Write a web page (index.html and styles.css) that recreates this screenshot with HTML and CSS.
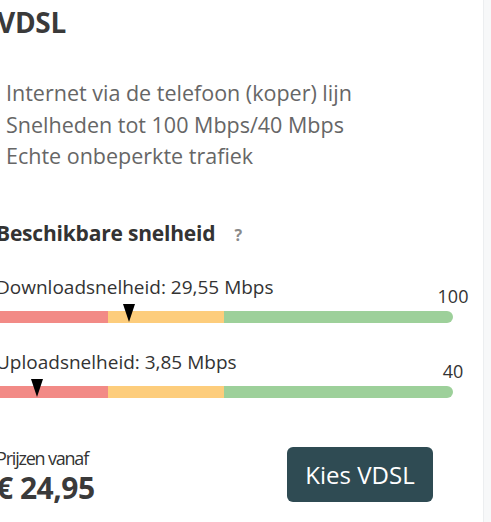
FILE: index.html
```html
<!DOCTYPE html>
<html lang="nl">
<head>
<meta charset="utf-8">
<title>VDSL</title>
<link rel="stylesheet" href="styles.css">
</head>
<body>
<div class="page">
  <main class="card">
    <h1 class="title">VDSL</h1>
    <ul class="features">
      <li>Internet via de telefoon (koper) lijn</li>
      <li>Snelheden tot 100 Mbps/40 Mbps</li>
      <li>Echte onbeperkte trafiek</li>
    </ul>
    <h2 class="subtitle">Beschikbare snelheid <span class="help">?</span></h2>

    <section class="speed speed-down">
      <div class="speed-head">
        <span class="speed-label">Downloadsnelheid: 29,55 Mbps</span>
        <span class="speed-max">100</span>
      </div>
      <div class="bar">
        <span class="seg seg-red"></span><span class="seg seg-yellow"></span><span class="seg seg-green"></span>
        <span class="marker" style="left:127px"></span>
      </div>
    </section>

    <section class="speed speed-up">
      <div class="speed-head">
        <span class="speed-label">Uploadsnelheid: 3,85 Mbps</span>
        <span class="speed-max">40</span>
      </div>
      <div class="bar">
        <span class="seg seg-red"></span><span class="seg seg-yellow"></span><span class="seg seg-green"></span>
        <span class="marker" style="left:35px"></span>
      </div>
    </section>

    <div class="pricing">
      <div class="price-block">
        <div class="price-from">Prijzen vanaf</div>
        <div class="price">€ 24,95</div>
      </div>
      <button class="cta" type="button">Kies VDSL</button>
    </div>
  </main>
  <aside class="side"></aside>
</div>
</body>
</html>
```

FILE: styles.css
```css
* { box-sizing: border-box; }
html, body { margin: 0; padding: 0; background: #fff; }
body {
  font-family: "Open Sans", "Liberation Sans", sans-serif;
  color: #3b3b3b;
  overflow: hidden;
}
.page {
  display: flex;
  width: 491px;
  height: 522px;
}
.card {
  width: 483px;
  flex: none;
  padding: 5px 13px 0 0;
}
.card > * { margin-left: -4px; }
.side {
  flex: 1;
  background: #f7f8f9;
  border-left: 1px solid #eceef0;
}
.title {
  margin: 0 0 0 -3px;
  font-size: 28px;
  line-height: 34px;
  font-weight: 700;
  color: #3a3a3a;
  letter-spacing: -0.3px;
}
.features {
  list-style: none;
  margin: 38px 0 0 -4px;
  padding: 0 0 0 10px;
  font-size: 21.5px;
  line-height: 31.5px;
  color: #666;
}
.subtitle {
  margin: 49px 0 0 -4px;
  font-size: 21px;
  line-height: 24px;
  font-weight: 700;
  color: #333;
  letter-spacing: -0.2px;
}
.help {
  font-size: 16px;
  color: #8a8a8a;
  margin-left: 14px;
  letter-spacing: 0;
}
.speed { margin-top: 28px; }
.speed-up { margin-top: 27px; }
.speed-head {
  display: flex;
  justify-content: space-between;
  align-items: flex-start;
}
.speed-label {
  font-size: 19px;
  line-height: 24px;
  color: #333;
}
.speed-max {
  width: 34px;
  text-align: center;
  font-size: 18px;
  line-height: 20px;
  margin-top: 11px;
  color: #333;
}
.bar {
  position: relative;
  display: flex;
  height: 12px;
  margin: 5px 17px 0 0;
  border-radius: 0 6px 6px 0;
}
.seg { display: block; height: 100%; }
.seg-red { width: 24.5%; background: #f28a86; }
.seg-yellow { width: 25.4%; background: #fdcd7c; }
.seg-green { flex: 1; background: #9dd09a; border-radius: 0 6px 6px 0; }
.marker {
  position: absolute;
  top: -7px;
  width: 0;
  height: 0;
  border-left: 6px solid transparent;
  border-right: 6px solid transparent;
  border-top: 18px solid #000;
}
.pricing {
  display: flex;
  align-items: center;
  margin-top: 49px;
}
.price-from {
  font-size: 18px;
  line-height: 22px;
  letter-spacing: -1.2px;
  color: #333;
}
.price {
  margin-top: 4px;
  font-size: 30px;
  line-height: 30px;
  font-weight: 700;
  color: #3a3a3a;
  letter-spacing: -0.5px;
}
.cta {
  margin-left: auto;
  margin-right: 37px;
  width: 146px;
  height: 55px;
  border: 0;
  border-radius: 6px;
  background: #2f4b53;
  color: #fff;
  font-family: "Open Sans", "Liberation Sans", sans-serif;
  font-size: 24px;
  line-height: 30px;
  padding: 0;
}
```
